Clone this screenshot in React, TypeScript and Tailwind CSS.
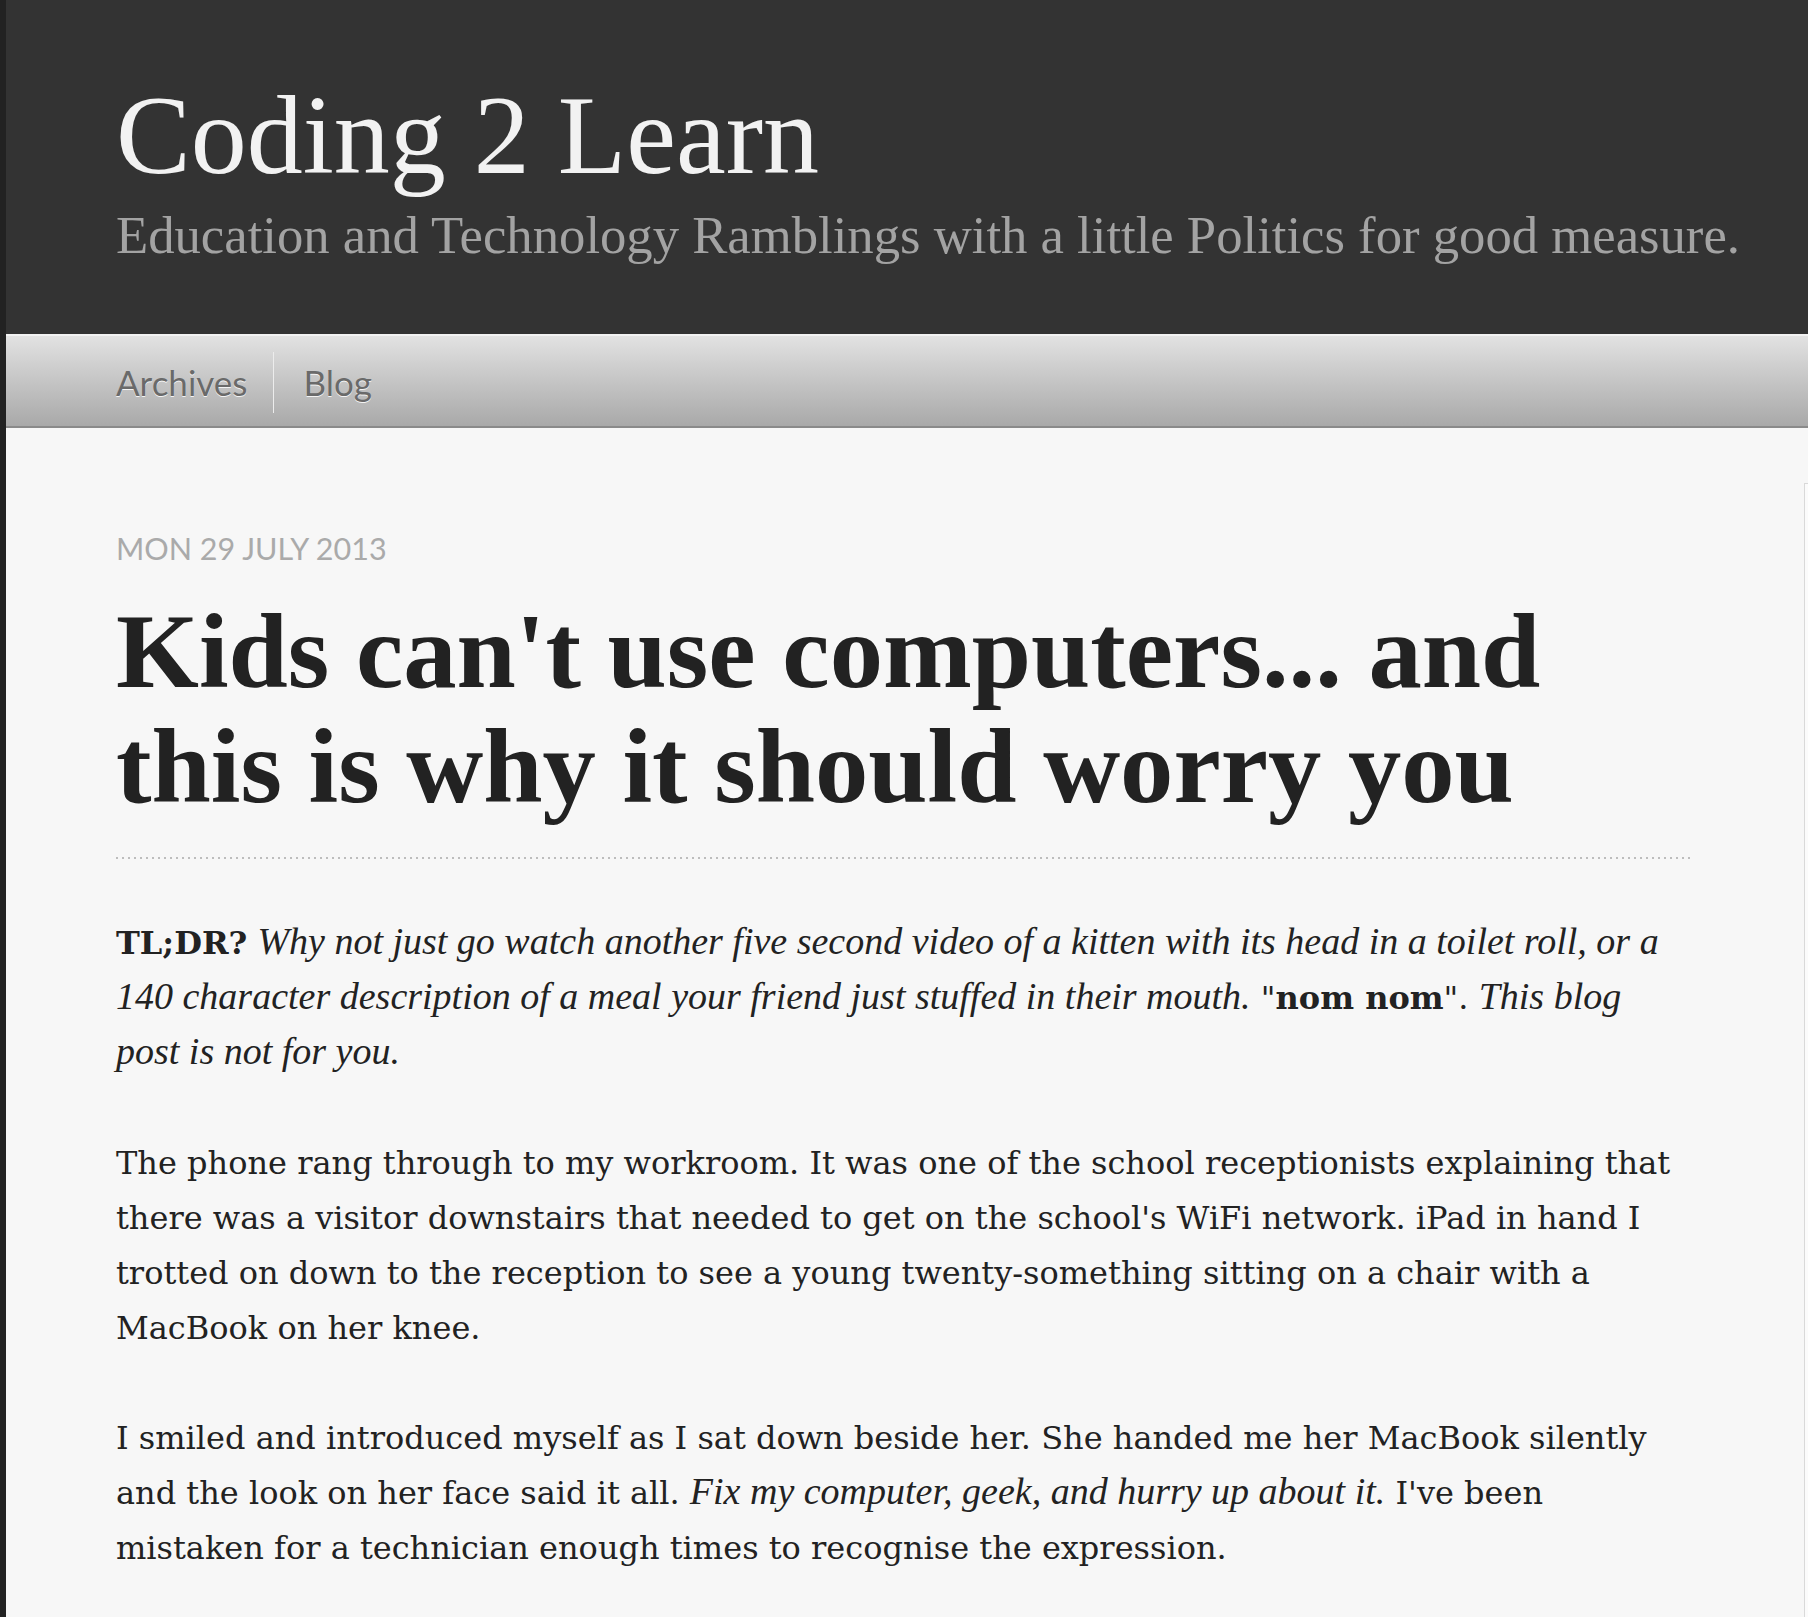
export default function App() {
  return (
    <div className="min-h-[1617px] bg-[#222] pl-[6px]">
      <div className="min-h-[1617px] bg-[#f7f7f7]">
        {/* Site header */}
        <header className="h-[336px] border-b-2 border-[#f2f2f2] bg-[#333] pl-[110px] pt-[79px] font-['Liberation_Serif',serif]">
          <h1 className="text-[112px] leading-[112px] text-[#f2f2f2]">Coding 2 Learn</h1>
          <h2 className="mt-[14px] text-[52.7px] leading-[60px] text-[#a3a3a3]">
            Education and Technology Ramblings with a little Politics for good measure.
          </h2>
        </header>

        {/* Navigation */}
        <nav className="flex h-[92px] items-start border-b-2 border-[#8a8a8a] bg-gradient-to-b from-[#e2e2e2] to-[#a9a9a9] pl-[110px] pt-[16px] font-['Lato',sans-serif] text-[35px] text-[#6a6a6a] [text-shadow:0_1px_0_#f4f4f4]">
          <a href="#" className="border-r border-[#ececec] pr-[25px] leading-[61px]">
            Archives
          </a>
          <a href="#" className="pl-[30px] leading-[61px]">
            Blog
          </a>
        </nav>

        {/* Content */}
        <div className="flex">
          <article className="w-[1798px] shrink-0 px-[110px] pt-[102px]">
            <header>
              <p className="font-['Lato',sans-serif] text-[30.5px] leading-[36px] text-[#aaa]">
                MON 29 JULY 2013
              </p>
              <h1 className="mt-[28px] font-['Liberation_Serif',serif] text-[106.6px] font-bold leading-[115px] text-[#222]">
                Kids can't use computers... and this is why it should worry you
              </h1>
              <div className="mt-[33px] h-[2px] bg-[linear-gradient(to_right,#bdbdbd_2px,transparent_2px)] bg-[length:6px_2px]" />
            </header>

            <div className="mt-[57px] font-['DejaVu_Serif',serif] text-[32px] leading-[55px] text-[#222]">
              <p className="mb-[55px]">
                <strong>TL;DR?</strong>{" "}
                <em className="font-['Liberation_Serif',serif] text-[38px] leading-[51px]">
                  Why not just go watch another five second video of a kitten with its head in a
                  toilet roll, or a 140 character description of a meal your friend just stuffed in
                  their mouth.
                </em>{" "}
                "<strong>nom nom</strong>".{" "}
                <em className="font-['Liberation_Serif',serif] text-[38px] leading-[51px]">
                  This blog post is not for you.
                </em>
              </p>
              <p className="mb-[55px]">
                The phone rang through to my workroom. It was one of the school receptionists
                explaining that there was a visitor downstairs that needed to get on the school's
                WiFi network. iPad in hand I trotted on down to the reception to see a young
                twenty-something sitting on a chair with a MacBook on her knee.
              </p>
              <p className="mb-[55px]">
                I smiled and introduced myself as I sat down beside her. She handed me her MacBook
                silently and the look on her face said it all.{" "}
                <em className="font-['Liberation_Serif',serif] text-[38px] leading-[51px]">
                  Fix my computer, geek, and hurry up about it.
                </em>{" "}
                I've been mistaken for a technician enough times to recognise the expression.
              </p>
            </div>
          </article>

          <aside className="mt-[55px] min-h-[1134px] flex-1 border-l border-t border-[#d9d9d9] bg-[#fbfbfb]" />
        </div>
      </div>
    </div>
  );
}
